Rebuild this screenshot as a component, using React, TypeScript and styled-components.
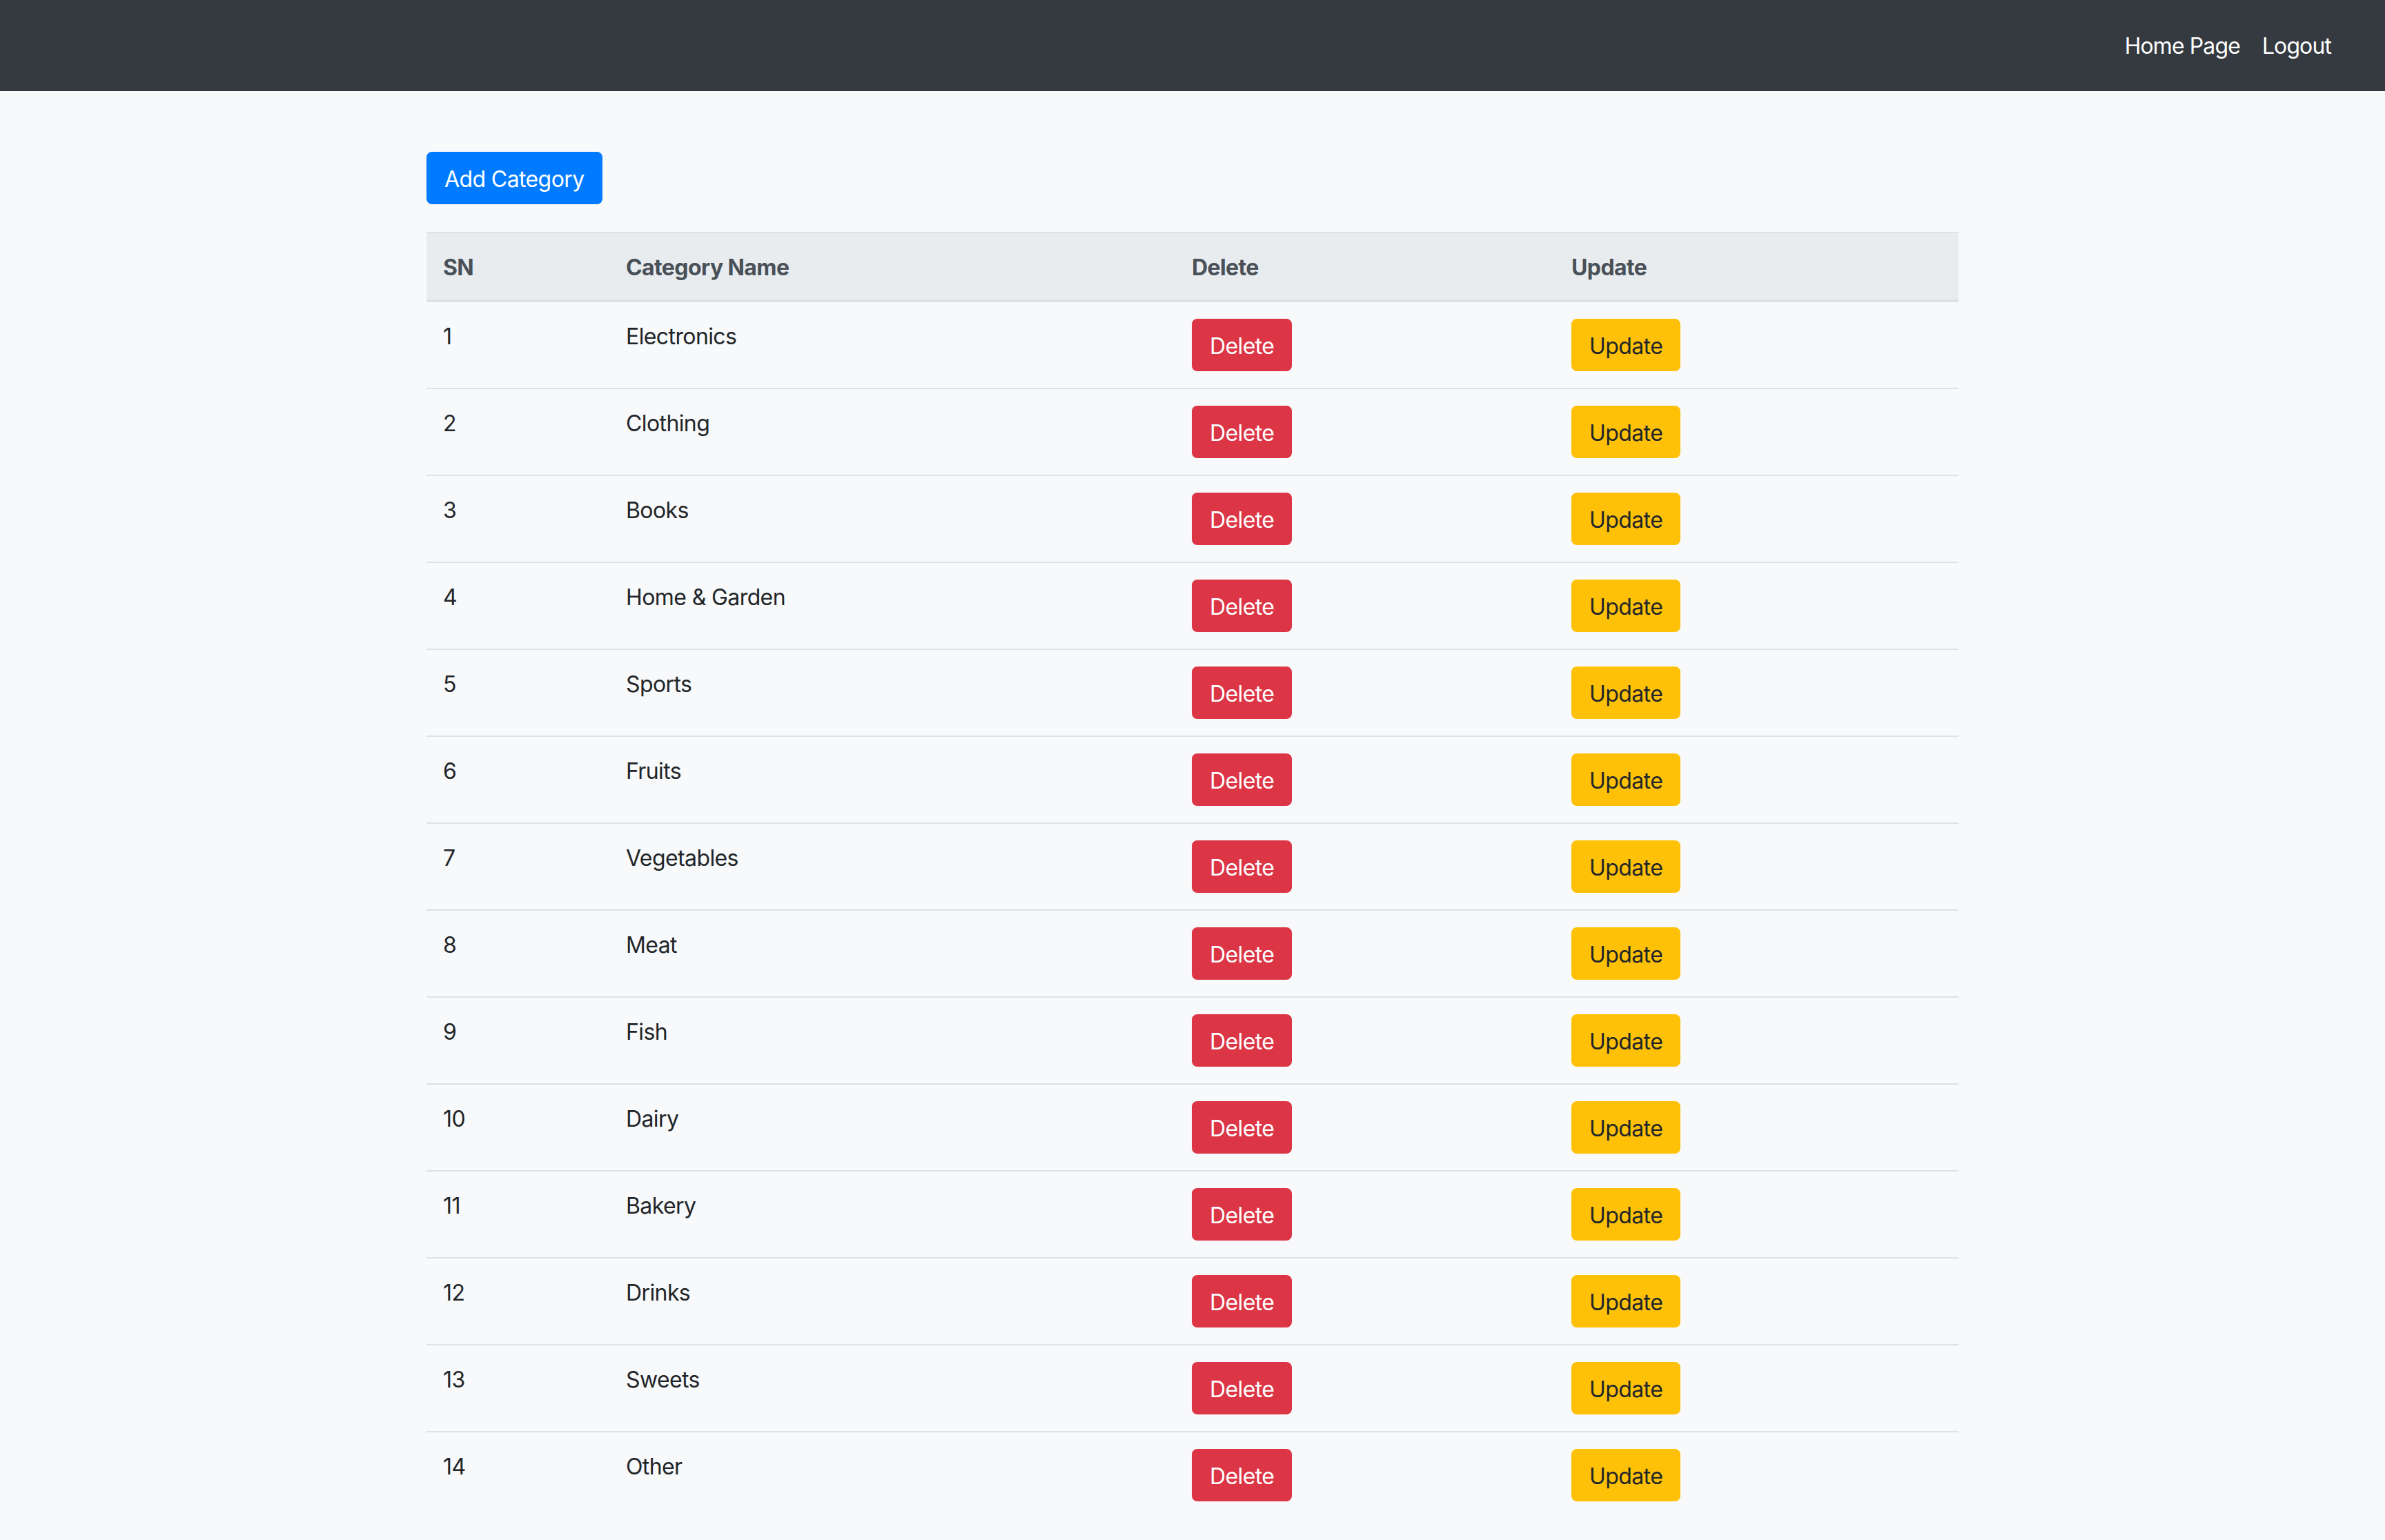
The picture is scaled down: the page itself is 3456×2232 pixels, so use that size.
import { FC } from "react"
import styled, { createGlobalStyle } from "styled-components"

const GlobalStyle = createGlobalStyle`
  html, body {
    margin: 0;
    padding: 0;
    background: #f8f9fa;
  }
  body {
    font-family: Inter, "Noto Sans", "Liberation Sans", sans-serif;
    font-size: 32px;
    line-height: 48px;
    letter-spacing: -0.6px;
    color: #212529;
  }
  * {
    box-sizing: border-box;
  }
`

const Navbar = styled.nav`
  display: flex;
  align-items: center;
  justify-content: flex-end;
  height: 132px;
  padding: 2px 62px 0;
  background: #343a40;
`
const NavLinks = styled.div`
  display: flex;
  align-items: center;
`
const NavLink = styled.a`
  color: #fff;
  padding: 0 16px;
  text-decoration: none;
  font-size: 32px;
  line-height: 48px;
  letter-spacing: -0.9px;
  cursor: pointer;
`
const Container = styled.main`
  width: 2220px;
  margin: 0 auto;
  padding-top: 88px;
`
const Button = styled.button<{ $variant: "primary" | "danger" | "warning" }>`
  display: inline-block;
  font-family: inherit;
  font-size: 32px;
  line-height: 48px;
  letter-spacing: -0.6px;
  padding: 14px 24px 10px;
  border: 2px solid transparent;
  border-radius: 8px;
  cursor: pointer;
  background: ${p =>
    p.$variant === "primary" ? "#007bff" : p.$variant === "danger" ? "#dc3545" : "#ffc107"};
  border-color: ${p =>
    p.$variant === "primary" ? "#007bff" : p.$variant === "danger" ? "#dc3545" : "#ffc107"};
  color: ${p => (p.$variant === "warning" ? "#212529" : "#fff")};
`
const Table = styled.table`
  width: 100%;
  margin-top: 40px;
  border-collapse: collapse;
  table-layout: fixed;
  color: #212529;
`
const HeadCell = styled.th<{ $width: number }>`
  width: ${p => p.$width}px;
  text-align: left;
  vertical-align: bottom;
  padding: 26px 24px 22px;
  font-weight: 700;
  color: #495057;
  background: #e9ecef;
  border-top: 2px solid #dee2e6;
  border-bottom: 4px solid #dee2e6;
`
const Row = styled.tr`
  border-top: 2px solid #dee2e6;
  &:first-child {
    border-top: none;
  }
`
const Cell = styled.td`
  padding: 24px;
  vertical-align: top;
`
const CellText = styled.div`
  padding-top: 2px;
  height: 48px;
`

const categories = [
  "Electronics",
  "Clothing",
  "Books",
  "Home & Garden",
  "Sports",
  "Fruits",
  "Vegetables",
  "Meat",
  "Fish",
  "Dairy",
  "Bakery",
  "Drinks",
  "Sweets",
  "Other",
]

const App: FC = () => {
  return (
    <>
      <GlobalStyle />
      <Navbar>
        <NavLinks>
          <NavLink>Home Page</NavLink>
          <NavLink>Logout</NavLink>
        </NavLinks>
      </Navbar>
      <Container>
        <Button $variant="primary">Add Category</Button>
        <Table>
          <thead>
            <tr>
              <HeadCell $width={265}>SN</HeadCell>
              <HeadCell $width={820}>Category Name</HeadCell>
              <HeadCell $width={550}>Delete</HeadCell>
              <HeadCell $width={585}>Update</HeadCell>
            </tr>
          </thead>
          <tbody>
            {categories.map((name, i) => (
              <Row key={name}>
                <Cell>
                  <CellText>{i + 1}</CellText>
                </Cell>
                <Cell>
                  <CellText>{name}</CellText>
                </Cell>
                <Cell>
                  <Button $variant="danger">Delete</Button>
                </Cell>
                <Cell>
                  <Button $variant="warning">Update</Button>
                </Cell>
              </Row>
            ))}
          </tbody>
        </Table>
      </Container>
    </>
  )
}

export default App
